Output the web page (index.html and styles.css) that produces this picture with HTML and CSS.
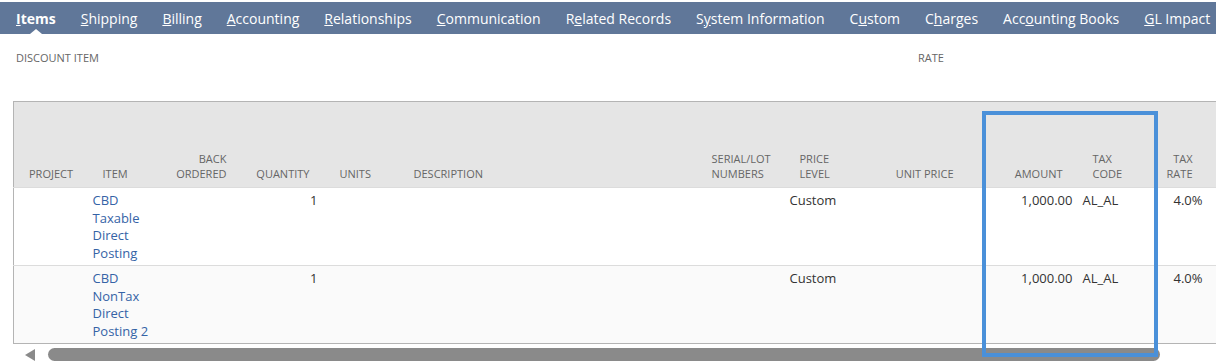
FILE: index.html
```html
<html lang="en">
    <head>
        <title>Items</title>
        <meta charset="UTF-8" />
        <link rel="stylesheet" href="styles.css">
    </head>

    <body>
        <div class="tabs">
            <span class="tab active"><u>I</u>tems</span>
            <span class="tab"><u>S</u>hipping</span>
            <span class="tab"><u>B</u>illing</span>
            <span class="tab"><u>A</u>ccounting</span>
            <span class="tab"><u>R</u>elationships</span>
            <span class="tab"><u>C</u>ommunication</span>
            <span class="tab">R<u>e</u>lated Records</span>
            <span class="tab">S<u>y</u>stem Information</span>
            <span class="tab">C<u>u</u>stom</span>
            <span class="tab">C<u>h</u>arges</span>
            <span class="tab">Acc<u>o</u>unting Books</span>
            <span class="tab"><u>G</u>L Impact</span>
        </div>

        <div class="fields">
            <label>Discount Item</label>
            <label>Rate</label>
        </div>

        <div class="grid">
            <table>
                <colgroup>
                    <col style="width: 79px"><col style="width: 67px"><col style="width: 77px">
                    <col style="width: 83px"><col style="width: 84px"><col style="width: 298px">
                    <col style="width: 88px"><col style="width: 80px"><col style="width: 94px">
                    <col style="width: 109px"><col style="width: 67px"><col style="width: 63px">
                    <col style="width: 57px">
                </colgroup>
                <thead>
                    <tr>
                        <th class="project">Project</th>
                        <th class="item">Item</th>
                        <th class="num">Back Ordered</th>
                        <th class="num">Quantity</th>
                        <th class="units">Units</th>
                        <th>Description</th>
                        <th>Serial/Lot Numbers</th>
                        <th>Price Level</th>
                        <th class="num">Unit Price</th>
                        <th class="num">Amount</th>
                        <th class="taxcode">Tax Code</th>
                        <th class="num">Tax Rate</th>
                        <th></th>
                    </tr>
                </thead>
                <tbody>
                    <tr>
                        <td></td>
                        <td class="item"><a href="#">CBD Taxable Direct Posting</a></td>
                        <td></td>
                        <td class="qty">1</td>
                        <td></td>
                        <td></td>
                        <td></td>
                        <td>Custom</td>
                        <td></td>
                        <td class="num">1,000.00</td>
                        <td class="taxcode">AL_AL</td>
                        <td class="num">4.0%</td>
                        <td></td>
                    </tr>
                    <tr class="alt">
                        <td></td>
                        <td class="item"><a href="#">CBD NonTax Direct Posting 2</a></td>
                        <td></td>
                        <td class="qty">1</td>
                        <td></td>
                        <td></td>
                        <td></td>
                        <td>Custom</td>
                        <td></td>
                        <td class="num">1,000.00</td>
                        <td class="taxcode">AL_AL</td>
                        <td class="num">4.0%</td>
                        <td></td>
                    </tr>
                </tbody>
            </table>

            <div class="scrollbar">
                <span class="arrow-left"></span>
                <span class="thumb"></span>
            </div>
        </div>

        <div class="highlight"></div>
    </body>
</html>
```

FILE: styles.css
```css
html {
    background: #fff;
}

body {
    margin: 0;
    position: relative;
    font-family: "Open Sans", "Liberation Sans", sans-serif;
    color: #333;
}

.tabs {
    display: flex;
    margin-top: 2px;
    height: 32px;
    padding-left: 3.5px;
    background: #607799;
    white-space: nowrap;
    overflow: hidden;
}

.tab {
    position: relative;
    padding: 1px 12.5px 0;
    font-size: 14px;
    line-height: 31px;
    color: #fff;
}

.tab.active {
    font-weight: bold;
}

.tab.active::after {
    content: "";
    position: absolute;
    left: 50%;
    bottom: 0;
    margin-left: -6px;
    border-left: 6px solid transparent;
    border-right: 6px solid transparent;
    border-bottom: 5px solid #fff;
}

.fields {
    display: grid;
    grid-template-columns: 902px auto;
    margin-top: 16px;
    padding-left: 16px;
}

.fields label {
    font-size: 11px;
    line-height: 15px;
    text-transform: uppercase;
    color: #666;
}

.grid {
    margin-top: 36px;
    margin-left: 13px;
    overflow: hidden;
}

table {
    table-layout: fixed;
    width: 1246px;
    border-collapse: collapse;
    border-top: 1px solid #b4b4b4;
    border-left: 1px solid #b4b4b4;
    border-bottom: 1px solid #b4b4b4;
}

thead tr {
    height: 86px;
    background: #e5e5e5;
}

th {
    padding: 0 10px 6px;
    vertical-align: bottom;
    text-align: left;
    font-size: 11px;
    font-weight: normal;
    line-height: 15px;
    text-transform: uppercase;
    color: #666;
}

th.project {
    padding-left: 15px;
}

th.num {
    text-align: right;
}

th.units,
th.taxcode {
    padding-left: 20px;
}

td {
    padding: 4px 0 3px;
    vertical-align: top;
    font-size: 13px;
    line-height: 17.5px;
}

tbody tr {
    border-top: 1px solid #dcdcdc;
}

tbody tr.alt {
    background: #fafafa;
}

td.item {
    padding-right: 5px;
}

td.item a {
    color: #3563a6;
    text-decoration: none;
}

td.qty {
    text-align: right;
    padding-right: 2px;
}

td.num {
    text-align: right;
}

td.taxcode {
    padding-left: 10px;
}

.scrollbar {
    display: flex;
    align-items: center;
    height: 21px;
}

.arrow-left {
    margin-left: 12px;
    border-top: 6px solid transparent;
    border-bottom: 6px solid transparent;
    border-right: 10px solid #8a8a8a;
}

.thumb {
    margin-left: 13px;
    width: 1112px;
    height: 13px;
    border-radius: 7px;
    background: #8a8a8a;
}

.highlight {
    position: absolute;
    left: 982px;
    top: 111px;
    width: 176px;
    height: 246px;
    box-sizing: border-box;
    border: 4px solid #4a90d9;
}
```
